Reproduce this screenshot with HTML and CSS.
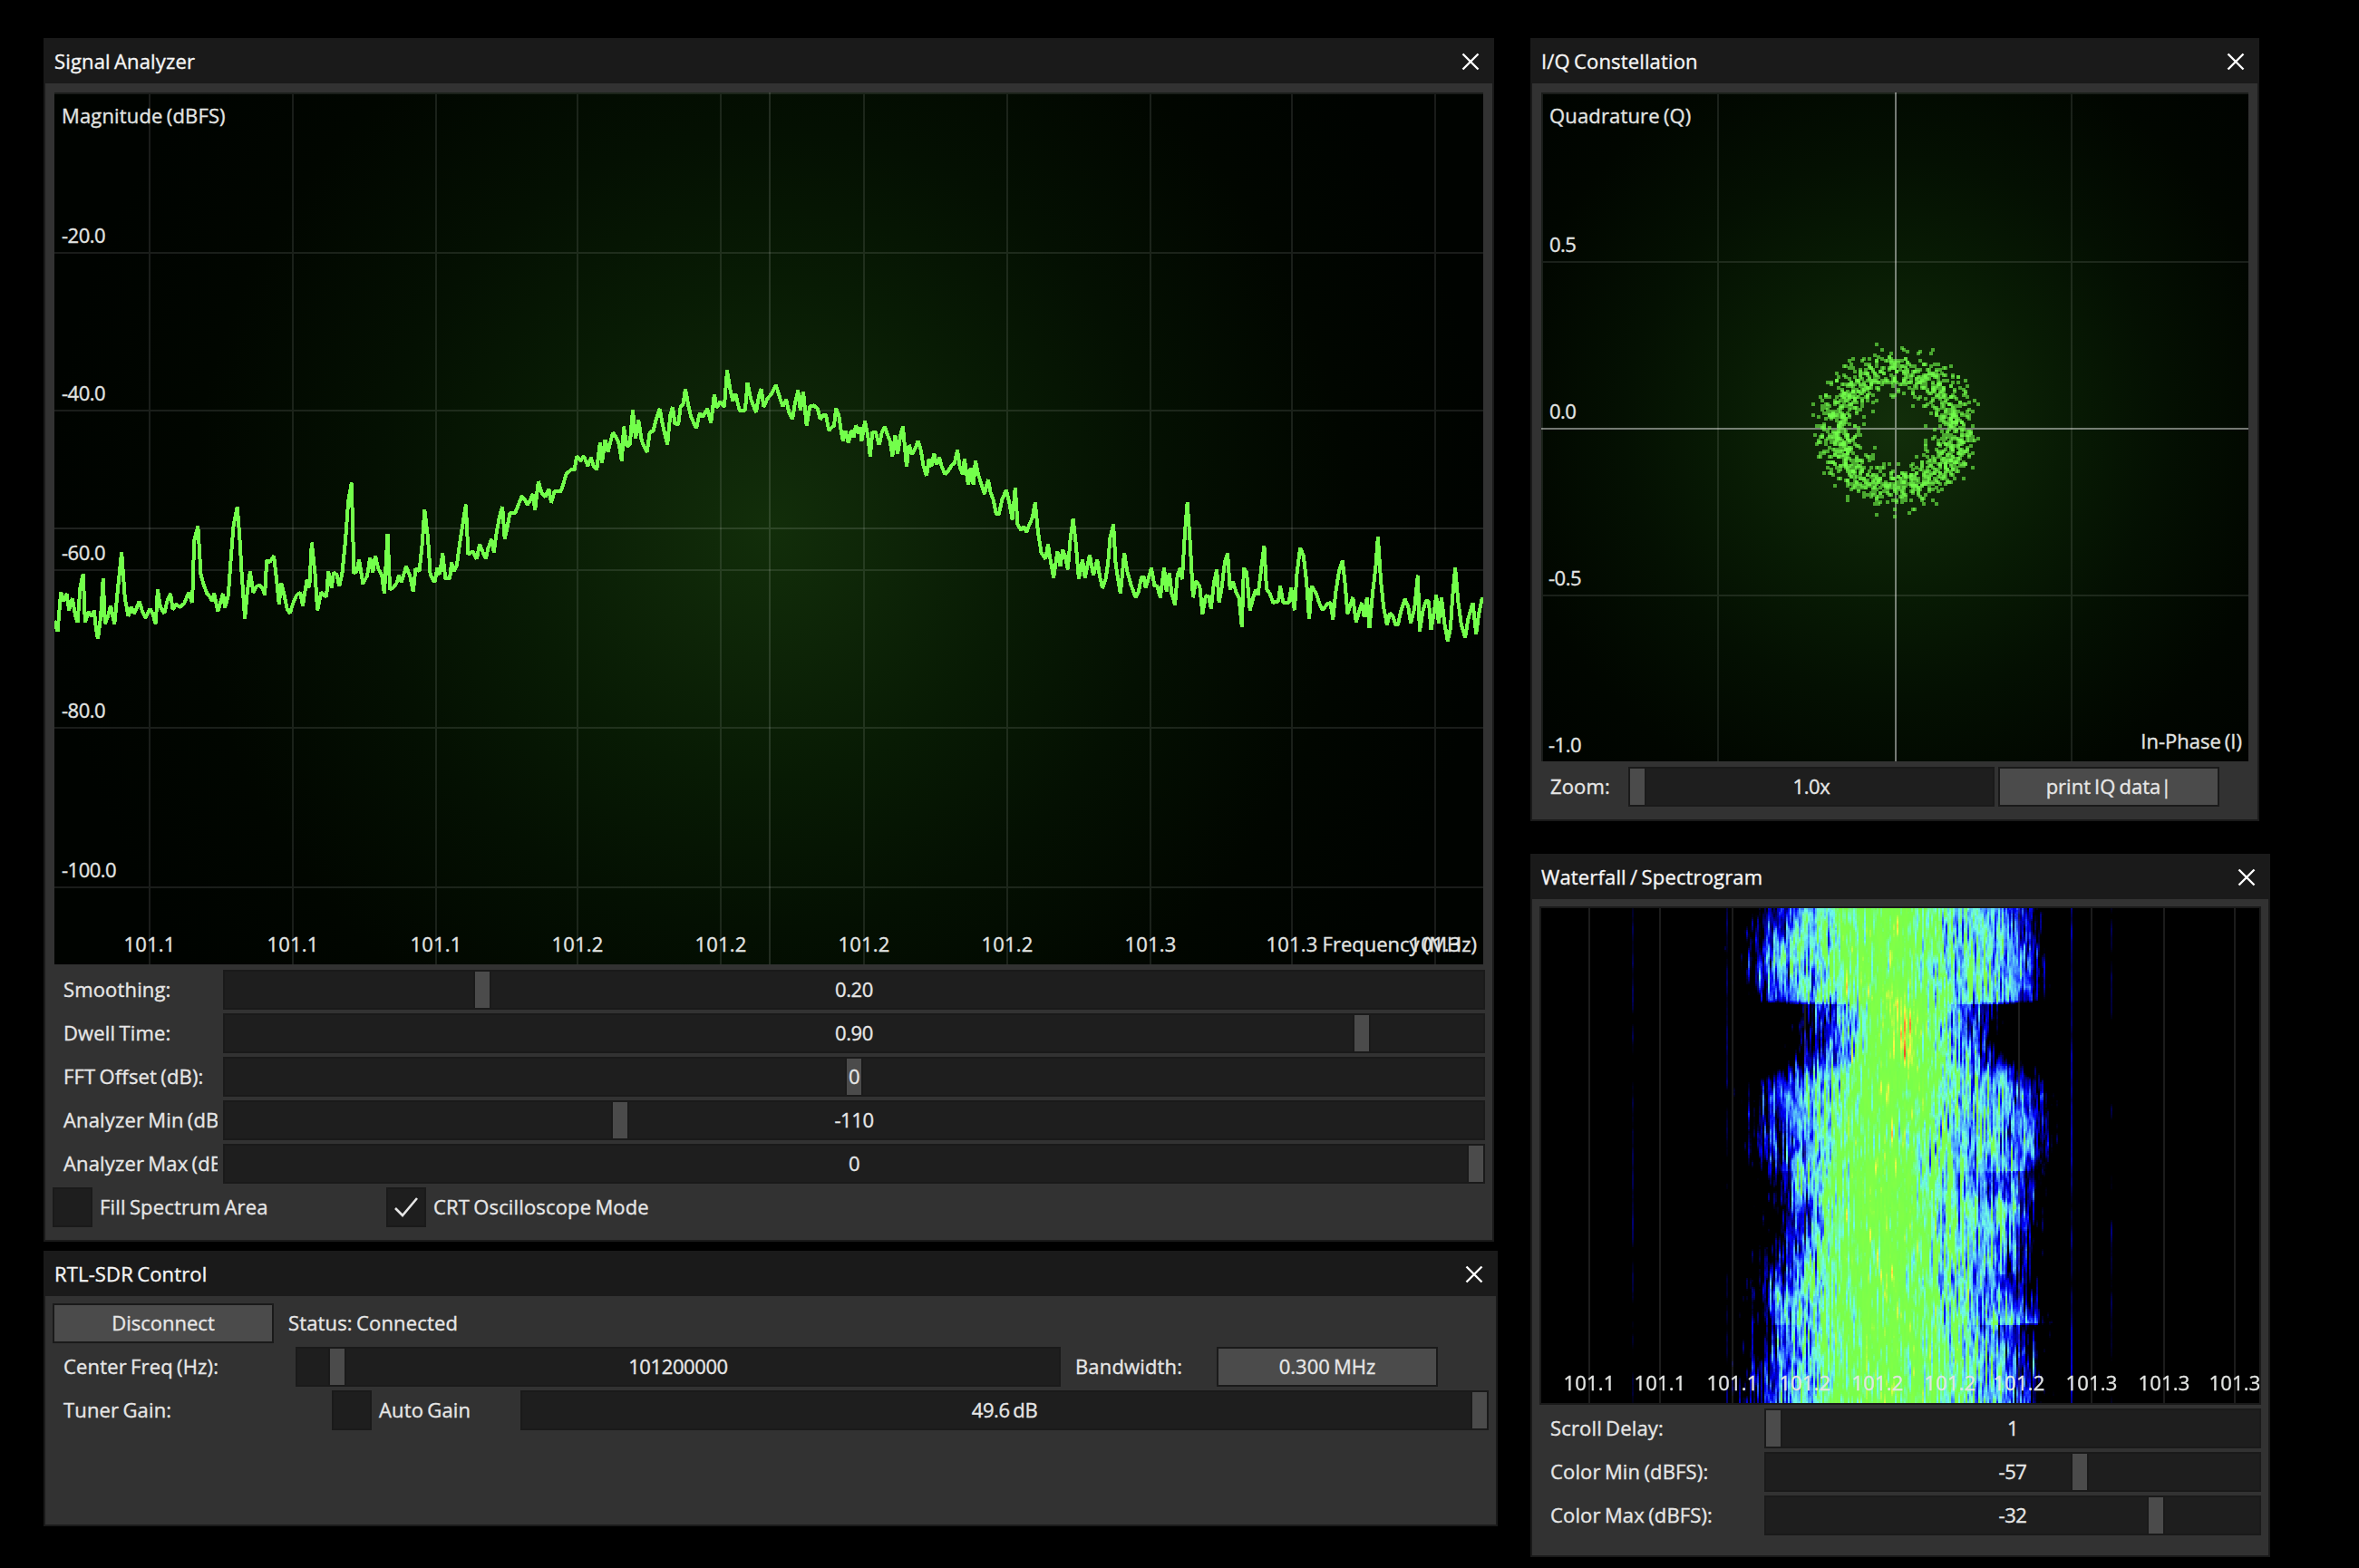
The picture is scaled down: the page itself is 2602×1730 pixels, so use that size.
FILE: index.html
```html
<!DOCTYPE html>
<html lang="en">
<head>
    <meta charset="UTF-8">
    <meta name="viewport" content="width=device-width, initial-scale=1.0">
    <title>SDR Signal Analyzer</title>
    <link rel="stylesheet" href="styles.css">
</head>
<body>
    <!-- Signal Analyzer -->
    <section class="window analyzer">
        <div class="header">
            <span>Signal Analyzer</span>
            <svg class="close" viewBox="0 0 20 20"><path d="M1.5 1.5L18.5 18.5M18.5 1.5L1.5 18.5"/></svg>
        </div>
        <div class="content">
            <svg class="plot crt" width="1576" height="962" viewBox="0 0 1576 962">
                <path class="grid" d="M0 1H1576M0 177H1576M0 351H1576M0 527H1576M0 701H1576M0 877H1576M105 0V962M263 0V962M421 0V962M577 0V962M735 0V962M893 0V962M1051 0V962M1209 0V962M1365 0V962M1523 0V962"/>
                <path class="axis" d="M0 481H1576M789 0V962"/>
                <polyline class="trace" transform="translate(-20 278) scale(.523 .3333)" points="38,915 45,950 52,820 58,850 64,825 69,880 76,840 82,895 87,920 93,800 99,760 103,920 110,885 117,900 122,880 126,940 130,975 136,900 141,775 145,925 151,900 157,865 161,900 165,925 172,810 180,688 187,840 194,900 200,870 206,890 211,875 217,850 224,885 230,905 240,875 246,895 252,925 256,812 262,870 270,890 277,845 283,825 288,878 295,860 302,870 312,858 321,822 329,855 333,650 341,602 347,760 352,790 360,825 366,835 371,850 375,822 383,885 389,850 394,825 398,872 405,830 411,700 416,600 424,537 429,640 433,750 440,908 445,820 451,752 458,822 465,800 472,798 478,810 482,830 486,715 493,720 501,700 507,780 512,860 517,790 523,830 529,875 535,890 542,855 549,830 557,822 562,865 567,815 571,778 576,805 581,656 588,760 593,880 601,820 607,832 612,835 616,752 623,805 627,755 634,762 639,800 645,760 652,650 658,520 665,458 670,758 676,750 681,712 689,793 698,765 704,706 710,755 715,700 722,745 729,765 734,825 741,627 746,812 753,805 760,790 765,765 770,788 780,735 788,765 795,818 800,742 808,750 814,660 819,548 826,640 831,760 840,788 846,740 851,762 857,692 863,775 872,775 876,722 881,750 887,730 893,660 899,600 906,530 911,695 920,685 929,710 935,662 942,688 948,710 953,675 960,645 965,688 971,620 977,570 983,537 988,645 994,600 999,558 1010,558 1017,530 1024,502 1031,515 1036,530 1042,515 1047,495 1052,548 1059,453 1066,492 1074,505 1081,478 1086,525 1093,487 1106,487 1112,460 1118,428 1128,415 1135,415 1140,370 1148,385 1155,370 1163,402 1170,375 1175,402 1182,415 1189,326 1193,392 1200,315 1206,355 1216,292 1224,310 1229,330 1235,387 1239,272 1246,338 1252,330 1258,218 1264,310 1270,250 1277,320 1288,357 1294,290 1301,288 1307,250 1315,213 1321,265 1331,332 1337,235 1342,207 1347,262 1354,265 1359,205 1364,200 1369,147 1375,200 1381,240 1392,278 1399,228 1406,240 1415,213 1423,260 1430,165 1435,210 1442,190 1451,207 1457,86 1463,145 1469,188 1475,165 1483,218 1495,218 1500,128 1507,180 1518,225 1524,170 1529,147 1534,207 1542,180 1550,165 1560,135 1569,180"/>
                <polyline class="trace" transform="translate(780 278) scale(.523 .3333)" points="39,180 45,205 52,183 58,225 65,248 70,200 77,152 82,218 88,158 95,268 102,205 110,202 118,212 124,248 131,232 136,235 142,285 148,275 153,268 157,212 163,235 168,290 172,320 177,285 183,327 189,285 194,308 199,267 204,295 208,275 211,320 218,254 224,300 229,370 234,290 241,292 248,333 254,290 260,272 266,300 271,320 276,370 282,302 287,363 293,300 298,272 306,405 311,333 318,363 324,345 330,320 336,350 341,400 348,435 353,380 358,405 364,362 369,398 375,375 380,405 387,430 394,418 401,400 407,392 413,350 418,405 424,430 428,380 436,465 441,410 447,465 451,386 457,430 463,460 470,495 478,447 483,490 489,515 495,562 501,560 507,515 516,482 522,520 529,580 535,475 540,595 547,615 553,603 559,622 565,595 571,575 577,523 583,620 590,690 599,710 604,662 610,720 616,772 624,686 630,735 635,680 640,700 646,745 651,650 657,577 663,660 669,777 677,712 682,772 692,697 700,765 708,712 713,765 719,807 726,775 731,720 735,640 742,596 747,730 757,825 765,690 771,750 779,795 789,838 795,820 801,770 806,770 810,805 817,770 822,740 829,800 834,798 841,838 849,740 854,818 860,757 865,825 872,862 877,765 883,740 887,778 893,620 898,523 904,660 910,838 916,783 924,800 930,892 937,832 943,835 948,875 954,790 960,745 965,855 971,800 977,720 983,692 988,812 994,785 1001,820 1007,840 1013,935 1017,740 1023,755 1030,880 1037,838 1042,812 1047,830 1054,740 1060,667 1065,810 1072,825 1079,855 1090,850 1094,800 1100,855 1112,855 1117,806 1124,880 1129,760 1136,673 1143,700 1149,780 1155,910 1160,800 1170,825 1176,855 1183,880 1194,858 1200,855 1205,910 1211,820 1218,750 1225,716 1230,780 1236,892 1242,860 1247,837 1254,920 1260,885 1266,855 1271,903 1277,837 1282,940 1289,820 1295,740 1300,637 1306,780 1312,870 1319,928 1325,890 1331,898 1337,928 1342,928 1349,880 1357,843 1364,870 1369,922 1377,875 1384,764 1388,950 1395,880 1401,850 1407,850 1412,945 1418,890 1423,830 1428,925 1434,837 1440,920 1447,982 1453,940 1457,840 1463,740 1469,850 1476,930 1484,970 1490,910 1500,855 1507,958 1513,890 1520,837"/>
                <g class="labels">
                    <text x="8" y="34">Magnitude (dBFS)</text>
                    <text class="num" x="8" y="166">-20.0</text>
                    <text class="num" x="8" y="340">-40.0</text>
                    <text class="num" x="8" y="516">-60.0</text>
                    <text class="num" x="8" y="690">-80.0</text>
                    <text class="num" x="8" y="866">-100.0</text>
                </g>
                <g class="labels ticks">
                    <text x="105" y="948">101.1</text>
                    <text x="263" y="948">101.1</text>
                    <text x="421" y="948">101.1</text>
                    <text x="577" y="948">101.2</text>
                    <text x="735" y="948">101.2</text>
                    <text x="893" y="948">101.2</text>
                    <text x="1051" y="948">101.2</text>
                    <text x="1209" y="948">101.3</text>
                    <text x="1365" y="948">101.3</text>
                    <text x="1523" y="948">101.3</text>
                </g>
                <text class="labels end" x="1569" y="948">Frequency (MHz)</text>
            </svg>
            <div class="row">
                <span class="label">Smoothing:</span>
                <div class="slider"><i style="left: 276px"></i><b>0.20</b></div>
            </div>
            <div class="row">
                <span class="label">Dwell Time:</span>
                <div class="slider"><i style="left: 1246px"></i><b>0.90</b></div>
            </div>
            <div class="row">
                <span class="label">FFT Offset (dB):</span>
                <div class="slider"><i style="left: 686px"></i><b>0</b></div>
            </div>
            <div class="row">
                <span class="label">Analyzer Min (dBFS):</span>
                <div class="slider"><i style="left: 428px"></i><b>-110</b></div>
            </div>
            <div class="row">
                <span class="label">Analyzer Max (dBFS):</span>
                <div class="slider"><i style="left: 1372px"></i><b>0</b></div>
            </div>
            <div class="row">
                <div class="check"><span class="box"></span>Fill Spectrum Area</div>
                <div class="check">
                    <span class="box"><svg viewBox="0 0 26 24"><path d="M1 13L9 21L25 2"/></svg></span>CRT Oscilloscope Mode
                </div>
            </div>
        </div>
    </section>

    <!-- RTL-SDR Control -->
    <section class="window control">
        <div class="header">
            <span>RTL-SDR Control</span>
            <svg class="close" viewBox="0 0 20 20"><path d="M1.5 1.5L18.5 18.5M18.5 1.5L1.5 18.5"/></svg>
        </div>
        <div class="content">
            <div class="row">
                <button>Disconnect</button>
                <span class="label status">Status: Connected</span>
            </div>
            <div class="row">
                <span class="label freq">Center Freq (Hz):</span>
                <div class="slider freq-slider"><i style="left: 36px"></i><b>101200000</b></div>
                <span class="label bandwidth">Bandwidth:</span>
                <button>0.300 MHz</button>
            </div>
            <div class="row">
                <span class="label gain">Tuner Gain:</span>
                <div class="check auto"><span class="box"></span>Auto Gain</div>
                <div class="slider"><i style="left: 1048px"></i><b>49.6 dB</b></div>
            </div>
        </div>
    </section>

    <!-- I/Q Constellation -->
    <section class="window constellation">
        <div class="header">
            <span>I/Q Constellation</span>
            <svg class="close" viewBox="0 0 20 20"><path d="M1.5 1.5L18.5 18.5M18.5 1.5L1.5 18.5"/></svg>
        </div>
        <div class="content">
            <div class="plot crt">
                <svg width="780" height="738" viewBox="0 0 780 738">
                    <path class="grid" d="M0 1H780M0 187H780M0 555H780M1 0V738M195 0V738M585 0V738"/>
                    <path class="axis bright" d="M0 371H780M391 0V738"/>
                    <g class="labels">
                        <text x="9" y="34">Quadrature (Q)</text>
                        <text class="num" x="9" y="176">0.5</text>
                        <text class="num" x="9" y="360">0.0</text>
                        <text class="num" x="8" y="544">-0.5</text>
                        <text class="num" x="8" y="728">-1.0</text>
                    </g>
                    <text class="labels end" x="773" y="724">In-Phase (I)</text>
                </svg>
                <canvas id="iq" class="overlay" width="780" height="738"></canvas>
            </div>
            <div class="row">
                <span class="label zoom">Zoom:</span>
                <div class="slider zoom-slider"><i style="left: 0"></i><b>1.0x</b></div>
                <button>print IQ data|</button>
            </div>
        </div>
    </section>

    <!-- Waterfall -->
    <section class="window waterfall">
        <div class="header">
            <span>Waterfall / Spectrogram</span>
            <svg class="close" viewBox="0 0 20 20"><path d="M1.5 1.5L18.5 18.5M18.5 1.5L1.5 18.5"/></svg>
        </div>
        <div class="content">
            <div class="spectrogram">
                <canvas id="waterfall" width="396" height="273"></canvas>
                <svg class="overlay" width="792" height="546" viewBox="0 0 792 546">
                    <g class="labels ticks">
                        <text x="53" y="532">101.1</text>
                        <text x="131" y="532">101.1</text>
                        <text x="211" y="532">101.1</text>
                        <text x="291" y="532">101.2</text>
                        <text x="371" y="532">101.2</text>
                        <text x="451" y="532">101.2</text>
                        <text x="527" y="532">101.2</text>
                        <text x="607" y="532">101.3</text>
                        <text x="687" y="532">101.3</text>
                        <text x="765" y="532">101.3</text>
                    </g>
                </svg>
            </div>
            <div class="row">
                <span class="label color">Scroll Delay:</span>
                <div class="slider"><i style="left: 0"></i><b>1</b></div>
            </div>
            <div class="row">
                <span class="label color">Color Min (dBFS):</span>
                <div class="slider"><i style="left: 338px"></i><b>-57</b></div>
            </div>
            <div class="row">
                <span class="label color">Color Max (dBFS):</span>
                <div class="slider"><i style="left: 422px"></i><b>-32</b></div>
            </div>
        </div>
    </section>

    <script src="script.js"></script>
</body>
</html>
```
FILE: styles.css
```css
* {
    margin: 0;
    padding: 0;
    box-sizing: border-box;
}

body {
    width: 2602px;
    height: 1730px;
    overflow: hidden;
    background-color: #000;
    color: #e6e6e6;
    font: 500 22px/42px "Open Sans", "Noto Sans", sans-serif;
    letter-spacing: 0.15px;
    word-spacing: -1.6px;
    -webkit-text-stroke: 0.35px;
}

/* Windows */
.window {
    position: absolute;
    background-color: #323232;
    border: 2px solid #1a1a1a;
}

.analyzer {
    left: 48px;
    top: 42px;
    width: 1600px;
    height: 1328px;
}

.control {
    left: 48px;
    top: 1380px;
    width: 1604px;
    height: 304px;
}

.constellation {
    left: 1688px;
    top: 42px;
    width: 804px;
    height: 864px;
}

.waterfall {
    left: 1688px;
    top: 942px;
    width: 816px;
    height: 776px;
}

.header {
    height: 48px;
    padding: 0 14px 0 10px;
    display: flex;
    align-items: center;
    justify-content: space-between;
    background-color: #1a1a1a;
    color: #f5f5f5;
}

.header span {
    margin-bottom: 2px;
}

.close {
    width: 20px;
    height: 20px;
    fill: none;
    stroke: #fff;
    stroke-width: 2.4;
}

.content {
    padding: 8px;
    display: flex;
    flex-direction: column;
    gap: 4px;
}

/* Plots */
.plot {
    display: block;
    margin: 2px;
    position: relative;
}

.plot svg,
.spectrogram canvas {
    display: block;
}

.crt {
    background: radial-gradient(circle 800px, #122e0a 0%, #0d2407 18%, #081b04 34%, #041002 55%, #010600 80%, #000300 100%);
}

.constellation .crt {
    background: radial-gradient(circle 540px, #122e0a 0%, #0d2407 18%, #081b04 34%, #041002 55%, #010600 80%, #000300 100%);
}

.grid,
.axis {
    fill: none;
    stroke: #fff;
    stroke-opacity: 0.1;
    stroke-width: 2;
}

.axis {
    stroke-opacity: 0.12;
}

.axis.bright {
    stroke-opacity: 0.45;
}

.trace {
    fill: none;
    stroke: #73ff4b;
    stroke-width: 4;
    stroke-linejoin: bevel;
    vector-effect: non-scaling-stroke;
    shape-rendering: crispEdges;
}

.labels {
    fill: #e2e4e2;
    stroke: #e2e4e2;
    stroke-width: 0.35;
}

.num {
    letter-spacing: -0.5px;
}

.ticks {
    text-anchor: middle;
}

.end {
    text-anchor: end;
    letter-spacing: 0;
}

.overlay {
    position: absolute;
    left: 0;
    top: 0;
}

.spectrogram {
    position: relative;
    height: 550px;
    border: 2px solid #1a1a1a;
    background-color: #000;
}

.spectrogram canvas {
    width: 792px;
    height: 546px;
    image-rendering: pixelated;
}

/* Controls */
.row {
    display: flex;
    gap: 4px;
    height: 44px;
}

.label {
    width: 182px;
    margin-right: 2px;
    padding-left: 12px;
    overflow: hidden;
    white-space: nowrap;
    flex-shrink: 0;
}

.status {
    width: 400px;
}

.freq {
    width: 262px;
}

.bandwidth {
    width: 162px;
}

.gain {
    width: 302px;
}

.zoom {
    width: 92px;
}

.color {
    width: 242px;
}

.slider {
    flex: 1;
    position: relative;
    background-color: #1e1e1e;
    border: 2px solid #1a1a1a;
    text-align: center;
    line-height: 38px;
}

.slider b {
    position: relative;
    font-weight: inherit;
    letter-spacing: -0.4px;
}

.slider i {
    position: absolute;
    top: 0;
    width: 16px;
    height: 40px;
    background-color: #4b4b4b;
    box-shadow: -2px 0 #1a1a1a, 2px 0 #1a1a1a;
}

.freq-slider {
    flex: 0 0 844px;
}

.zoom-slider {
    flex: 0 0 404px;
}

button {
    width: 244px;
    height: 44px;
    padding-bottom: 2px;
    border: 2px solid #1a1a1a;
    background-color: #4b4b4b;
    color: inherit;
    font: inherit;
    line-height: 38px;
    word-spacing: -1.6px;
}

.check {
    width: 364px;
    display: flex;
    gap: 8px;
}

.auto {
    width: 204px;
}

.box {
    width: 44px;
    height: 44px;
    display: flex;
    align-items: center;
    justify-content: center;
    background-color: #1e1e1e;
    border: 2px solid #1a1a1a;
}

.box svg {
    width: 26px;
    height: 24px;
    fill: none;
    stroke: #e6e6e6;
    stroke-width: 2.6;
}
```
FILE: script.js
```js
// Seeded random so every load draws the same samples
let seed = 7;
const rand = () => {
    seed = (seed * 1664525 + 1013904223) >>> 0;
    return seed / 4294967296;
};
const gauss = () => (rand() + rand() + rand() + rand() - 2) * 1.73;

// I/Q samples: FM carrier gives a ring around the origin
function drawConstellation() {
    const ctx = document.getElementById('iq').getContext('2d');
    ctx.fillStyle = 'rgba(115, 255, 75, 0.6)';
    for (let i = 0; i < 1300; i++) {
        const angle = rand() * Math.PI * 2;
        const radius = 64 + gauss() * 11.5;
        const x = 391 + Math.cos(angle) * radius * 1.05;
        const y = 372 + Math.sin(angle) * radius;
        ctx.fillRect(Math.round(x / 2) * 2 - 2, Math.round(y / 2) * 2 - 2, 4, 4);
    }
}

const stops = [
    [0, 0, 0, 0], [0.1, 0, 0, 120], [0.22, 0, 0, 250], [0.34, 70, 150, 255],
    [0.45, 110, 250, 235], [0.57, 120, 255, 75], [0.72, 130, 255, 70],
    [0.82, 245, 250, 70], [0.92, 255, 140, 50], [1, 235, 60, 30]
];

function colormap(v) {
    v = Math.max(0, Math.min(1, v));
    let i = 1;
    while (stops[i][0] < v) i++;
    const a = stops[i - 1], b = stops[i];
    const t = (v - a[0]) / (b[0] - a[0]);
    return [1, 2, 3].map(k => a[k] + (b[k] - a[k]) * t);
}

// Row, then columns of: outer left, cyan left, green left, green right, cyan right, outer right
const bands = [
    [0, 252, 293, 327, 433, 500, 540],
    [53, 240, 257, 320, 430, 530, 547],
    [86, 242, 277, 320, 430, 533, 547],
    [101, 253, 290, 333, 437, 507, 547],
    [106, 300, 334, 345, 435, 458, 490],
    [144, 302, 334, 350, 435, 454, 482],
    [170, 285, 330, 342, 440, 462, 505],
    [190, 250, 290, 335, 434, 500, 540],
    [206, 245, 270, 330, 427, 530, 550],
    [268, 248, 293, 323, 427, 537, 548],
    [288, 260, 273, 317, 427, 527, 543],
    [291, 263, 277, 317, 427, 480, 543],
    [308, 270, 280, 310, 427, 480, 542],
    [330, 272, 305, 316, 430, 522, 537],
    [375, 268, 292, 307, 437, 513, 530],
    [402, 250, 283, 307, 437, 507, 525],
    [405, 248, 280, 307, 433, 495, 525],
    [424, 246, 260, 313, 433, 500, 532],
    [457, 247, 270, 313, 440, 538, 547],
    [460, 257, 280, 313, 447, 487, 530],
    [546, 230, 270, 310, 450, 513, 543]
];
const levels = [0.1, 0.36, 0.52, 0.52, 0.36, 0.1];

function level(x, row) {
    const edge = row.slice(1);
    if (x < edge[0]) return 0.1 - (edge[0] - x) * 0.01;
    if (x > edge[5]) return 0.1 - (x - edge[5]) * 0.014;
    for (let i = 1; i < 6; i++) {
        if (x <= edge[i]) {
            const t = (x - edge[i - 1]) / (edge[i] - edge[i - 1]);
            const bump = i === 3 ? Math.sin(t * Math.PI) * 0.1 : 0;
            return levels[i - 1] + (levels[i] - levels[i - 1]) * t + bump;
        }
    }
}

function drawWaterfall() {
    const canvas = document.getElementById('waterfall');
    const ctx = canvas.getContext('2d');
    const image = ctx.createImageData(canvas.width, canvas.height);
    const gridX = [26, 65, 105, 145, 185, 225, 263, 303, 343, 382];
    // narrow carriers outside the main signal: column, strength
    const spurs = { 50: 0.02, 102: 0.01, 292: 0.09, 314: 0.02 };

    for (let c = 0; c < canvas.width; c++) {
        let drift = gauss() * 0.5;
        let noise = drift;
        for (let r = 0; r < canvas.height; r++) {
            const y = r * 2;
            const x = c * 2;
            // two stage smoothing gives soft vertical streaks
            drift = drift * 0.86 + gauss() * 0.51;
            noise = noise * 0.72 + drift * 0.31;

            let k = 1;
            while (bands[k][0] < y) k++;
            const a = bands[k - 1], b = bands[k];
            const t = (y - a[0]) / (b[0] - a[0]);
            const row = a.map((v, i) => v + (b[i] - v) * t);

            let v = level(x, row);
            const spread = x > row[3] && x < row[4] ? 0.08 : 0.12;
            v += noise * spread;
            // strong modulation peak
            v += 0.15 * Math.exp(-(((x - 400) / 18) ** 2) - ((y - 130) / 50) ** 2);
            if (spurs[c]) v = Math.max(v, spurs[c] + noise * 0.04);

            let rgb = colormap(v);
            if (gridX.includes(c)) rgb = rgb.map(n => Math.max(n, 28));
            const p = (r * canvas.width + c) * 4;
            image.data[p] = rgb[0];
            image.data[p + 1] = rgb[1];
            image.data[p + 2] = rgb[2];
            image.data[p + 3] = 255;
        }
    }
    ctx.putImageData(image, 0, 0);
}

drawConstellation();
drawWaterfall();
```
